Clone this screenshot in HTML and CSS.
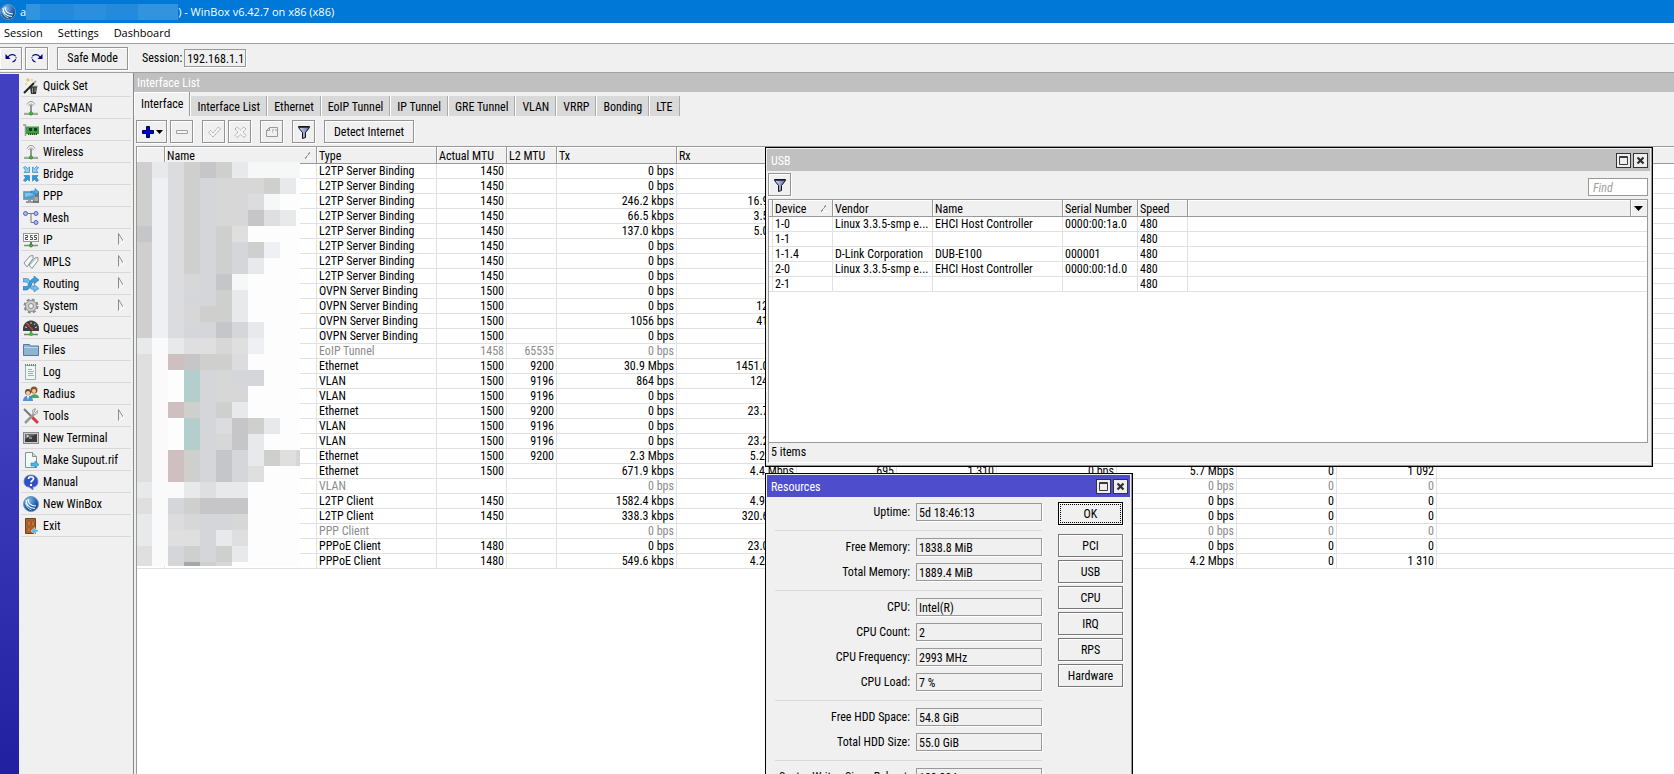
FILE: index.html
```html
<!DOCTYPE html>
<html lang="en">
<head>
<meta charset="utf-8">
<title>WinBox</title>
<link rel="stylesheet" href="styles.css">
</head>
<body>
<svg class="defs" aria-hidden="true">
  <defs>
    <linearGradient id="funnel-fill" x1="0" x2="1" y1="0" y2="0"><stop offset="0" stop-color="#dfe6f5"/><stop offset="1" stop-color="#5468a8"/></linearGradient>
    <radialGradient id="ball" cx=".35" cy=".25" r=".8"><stop offset="0" stop-color="#8cc4f0"/><stop offset=".55" stop-color="#2a70bd"/><stop offset="1" stop-color="#0d3e7c"/></radialGradient>
    <symbol id="i-filter" viewBox="0 0 16 16"><path d="M2.500 2.500h11v1l-4 5v5l-3 1v-6l-4-5z" fill="url(#funnel-fill)" stroke="#101018"/><path d="M3 3.500h10" stroke="#333c58"/></symbol>
    <symbol id="i-globe" viewBox="0 0 16 16"><circle cx="8" cy="8" r="7.500" fill="url(#ball)" stroke="#7393b5"/><path d="M3 4c0 5 3 8 9 8.500M5 3c0 4 3 7 8 7" stroke="#fff" stroke-width="1.200" fill="none"/><path d="M2.500 7c1 4 3 6 6 7" stroke="#b9dcf7" fill="none"/></symbol>
    <symbol id="i-antenna" viewBox="0 0 16 16"><path d="M4 4.500c2-4 6-4 8 0M5.500 6c1-2.500 4-2.500 5 0" fill="none" stroke="#9a9a9a"/><path d="M8 5v7" stroke="#777" stroke-width="1.500"/><path d="M1 13.500h14" stroke="#a8aaa8" stroke-width="1.500"/><path d="M1 14.500h14" stroke="#777" stroke-width=".6"/><circle cx="8" cy="13.500" r="1.600" fill="#2bc52f" stroke="#16721a" stroke-width=".6"/></symbol>
    <symbol id="i-more" viewBox="0 0 6 12"><path d="M.500 11.500V.500l5 8" fill="none" stroke="#8c8c8c"/><path d="M5.500 7v2L1 11.500" fill="none" stroke="#fff"/></symbol>
  </defs>
</svg>

<header class="titlebar">
  <svg class="icon" viewBox="0 0 16 16"><use href="#i-globe"/></svg>
  <h1 class="caption"><span>a</span><span class="masked"><i></i><i></i><i></i><i></i><i></i></span><span>) - WinBox v6.42.7 on x86 (x86)</span></h1>
</header>

<nav class="menubar">
  <button type="button">Session</button>
  <button type="button">Settings</button>
  <button type="button">Dashboard</button>
</nav>

<div class="toolbar">
  <button type="button" class="btn tool first" aria-label="Undo"><svg class="icon" viewBox="0 0 16 16"><path d="M2.500 4v5h5z" fill="#000080"/><path d="M5 7c2-3 6-3 7.500-1s0 5-3 6" fill="none" stroke="#000080" stroke-width="1.200" stroke-dasharray="9 1 1 1"/></svg></button>
  <button type="button" class="btn tool" aria-label="Redo"><svg class="icon" viewBox="0 0 16 16"><path d="M13.500 4v5h-5z" fill="#000080"/><path d="M11 7c-2-3-6-3-7.500-1s0 5 3 6" fill="none" stroke="#000080" stroke-width="1.200" stroke-dasharray="9 1 1 1"/></svg></button>
  <button type="button" class="btn safe">Safe Mode</button>
  <label class="session">Session: <input class="field" value="192.168.1.1" readonly></label>
</div>

<div class="workspace">
  <div class="brand"></div>
  <nav class="sidebar">
    <a href="#quick"><svg class="icon" viewBox="0 0 16 16"><path d="M7 9h7l-1 7H8z" fill="#333"/><path d="M6.500 8.500h8" stroke="#777" stroke-width="1.500"/><path d="M1 15l10-10" stroke="#222" stroke-width="2"/><path d="M11 5l2-2" stroke="#aaa" stroke-width="2"/><path d="M9.500 10v5M12 10v4" stroke="#999"/><path d="M5 0v4M3 2h4M9 1v2M3 5v2" stroke="#e0bd35"/></svg>Quick Set</a>
    <a href="#capsman"><svg class="icon" viewBox="0 0 16 16"><use href="#i-antenna"/></svg>CAPsMAN</a>
    <a href="#interfaces"><svg class="icon" viewBox="0 0 16 16"><path d="M0 3h2.500v11" fill="none" stroke="#999" stroke-width="1.500"/><path d="M3 4h13v8H3z" fill="#3e9b46"/><path d="M3 4.500h13" stroke="#8bd184"/><path d="M6 6h3v3H6zM11 6h3v3h-3z" fill="#173d1d"/><path d="M5 12h9v1H5z" fill="#b3a33e"/><path d="M5.500 11v2M7.500 11v2M9.500 11v2M11.500 11v2M13.500 11v2" stroke="#1c5726"/></svg>Interfaces</a>
    <a href="#wireless"><svg class="icon" viewBox="0 0 16 16"><use href="#i-antenna"/></svg>Wireless</a>
    <a href="#bridge"><svg class="icon" viewBox="0 0 16 16"><g stroke="#3a83b5" stroke-width=".7"><path d="M.500 1.500l2-1 2 2L6.500 1v5.500H1l1.500-2z" fill="#8dd0f4"/><path d="M15.500 1.500l-2-1-2 2L9.500 1v5.500H15l-1.500-2z" fill="#8dd0f4"/><path d="M.500 14.500l2 1 2-2 2 1.500V9.500H1l1.500 2z" fill="#2b9ae0"/><path d="M15.500 14.500l-2 1-2-2-2 1.500V9.500H15l-1.500 2z" fill="#2b9ae0"/></g></svg>Bridge</a>
    <a href="#ppp"><svg class="icon" viewBox="0 0 16 16"><path d="M10 4h6v11h-6z" fill="#777"/><path d="M11 10h4M11 12h4" stroke="#ddd"/><path d="M.500 3.500h11v8H.500z" fill="#4e9ed2" stroke="#999"/><path d="M2 5h8v2L2 9z" fill="#82c2e8"/><path d="M3 14h7M5 12.500h3" stroke="#999" stroke-width="2"/><path d="M8 3h4V.500L16 4l-4 3.500V5H8z" fill="#45b1ef" stroke="#2573ae" stroke-width=".6"/></svg>PPP</a>
    <a href="#mesh"><svg class="icon" viewBox="0 0 16 16"><path d="M5 3.500h6M8 3.500v9h3" fill="none" stroke="#777"/><g fill="#a9b9f3" stroke="#4d63c0"><circle cx="2.500" cy="3.500" r="2"/><circle cx="13" cy="3.500" r="2"/><circle cx="13" cy="12.500" r="2"/></g></svg>Mesh</a>
    <a href="#ip"><svg class="icon" viewBox="0 0 16 16"><rect x=".5" y="1.500" width="15" height="8" fill="#f8f8f8" stroke="#999"/><path d="M2 3.500h2.500v2h-2v2H5M9.500 3.500h-2v2h2v2H7M14 3.500h-2.500v2h2v2H11" fill="none" stroke="#444" stroke-width=".9"/><path d="M8 10v3" stroke="#777" stroke-width="2"/><path d="M1 13.500h14" stroke="#888" stroke-width="1.500"/><circle cx="8" cy="13.500" r="1.600" fill="#2bc52f" stroke="#16721a" stroke-width=".6"/></svg>IP<svg class="more"><use href="#i-more"/></svg></a>
    <a href="#mpls"><svg class="icon" viewBox="0 0 16 16"><g fill="#f5f8f8" stroke="#879494"><path d="M1 9l6-7 3-.5v3L4 13z"/><path d="M6 11l6-7 3-.5v3L9 14.500z"/></g><path d="M7 11l6-6" stroke="#c1dede"/></svg>MPLS<svg class="more"><use href="#i-more"/></svg></a>
    <a href="#routing"><svg class="icon" viewBox="0 0 16 16"><path d="M0 2.500h4c4 0 3 8 7 8V8.500l5 4-5 3.500v-2.500C5 14 6 6 3 6H0z" fill="#6cbcf0" stroke="#3a80b0" stroke-width=".6"/><path d="M0 10.500h3c4 0 3-8 8-8V0l5 4-5 4V5.500C8 6 8 14 3 14H0z" fill="#3d9be0" stroke="#2d72a5" stroke-width=".6"/></svg>Routing<svg class="more"><use href="#i-more"/></svg></a>
    <a href="#system"><svg class="icon" viewBox="0 0 16 16"><circle cx="8" cy="8" r="6.500" fill="none" stroke="#8b8b8b" stroke-width="2" stroke-dasharray="3 2.100"/><circle cx="8" cy="8" r="5.500" fill="#cdcdcd" stroke="#929292"/><circle cx="8" cy="8" r="2.500" fill="#f0f0f0" stroke="#888"/></svg>System<svg class="more"><use href="#i-more"/></svg></a>
    <a href="#queues"><svg class="icon" viewBox="0 0 16 16"><path d="M0 11C-1 4 4 .500 8 .500S17 4 16 11z" fill="#3d4040"/><path d="M2 7l2 .5M4 3.500l1.500 1.500M8 2v2M12 3.500L11 5M14 7l-2 .5" stroke="#ccc"/><path d="M3 3l7 7" stroke="#e03434" stroke-width="1.300"/><path d="M1 14.500h14" stroke="#777" stroke-width="1.500"/><path d="M8 11v2" stroke="#777" stroke-width="2"/><circle cx="8" cy="14" r="2" fill="#2bc52f"/></svg>Queues</a>
    <a href="#files"><svg class="icon" viewBox="0 0 16 16"><path d="M.500 13.500v-11h6l1 1.500h8v9.500z" fill="#8eb4d4" stroke="#527a9d"/><path d="M1 5.500h14" stroke="#bed7e9"/></svg>Files</a>
    <a href="#log"><svg class="icon" viewBox="0 0 16 16"><path d="M2.500 1.500h10v14h-10z" fill="#eef6f4" stroke="#9bb0ad"/><path d="M2 1h11" stroke="#6f8583" stroke-width="2" stroke-dasharray="1 1"/><path d="M5 5.500h4M5 7.500h6M5 9.500h5M5 11.500h6" stroke="#9fb2b0"/></svg>Log</a>
    <a href="#radius"><svg class="icon" viewBox="0 0 16 16"><circle cx="11" cy="4" r="3.500" fill="#8a5428"/><circle cx="11" cy="5" r="2" fill="#f0c79c"/><path d="M7 12c0-5 9-5 9 0z" fill="#49a55e"/><circle cx="5" cy="6" r="3" fill="#784521"/><circle cx="5" cy="7" r="2" fill="#f3cfaa"/><path d="M0 15c0-7 10-7 10 0z" fill="#4f91d2"/><path d="M4 10l1 4 1-4z" fill="#fff"/></svg>Radius</a>
    <a href="#tools"><svg class="icon" viewBox="0 0 16 16"><path d="M1 1l8 8" stroke="#777" stroke-width="2"/><path d="M9 9l5 5" stroke="#d8383e" stroke-width="3" stroke-linecap="round"/><path d="M2 15l9-9" stroke="#999" stroke-width="2.500"/><path d="M14.500 2.500l-2 2-1.500-1.500 2-2C8 0 9 7 12 6.500c2 0 3-2 2.500-4z" fill="#d7d7d7" stroke="#888" stroke-width=".7"/></svg>Tools<svg class="more"><use href="#i-more"/></svg></a>
    <a href="#terminal"><svg class="icon" viewBox="0 0 16 16"><rect x=".5" y="2.500" width="15" height="11" fill="#ccc" stroke="#888"/><path d="M2 4h12v8H2z" fill="#3c3c3f"/><path d="M2 4h12L2 9z" fill="#67686c"/><path d="M3.500 5l2 1-2 1M6 8h3" fill="none" stroke="#fff" stroke-width=".8"/></svg>New Terminal</a>
    <a href="#supout"><svg class="icon" viewBox="0 0 16 16"><path d="M2.500.500h7l4 4v11h-11z" fill="#f1f9f7" stroke="#839593"/><path d="M9.500.500v4h4" fill="#c8d8d6" stroke="#839593"/><path d="M8 11h4V9l4 3.500-4 3.500v-2H8z" fill="#49b6ef" stroke="#2a78ad" stroke-width=".6"/></svg>Make Supout.rif</a>
    <a href="#manual"><svg class="icon" viewBox="0 0 16 16"><path d="M8 1c9 0 9 12 2 12v3l-4-3C-1 13-1 1 8 1z" fill="#3050c8" stroke="#7184cf" stroke-width=".8"/><path d="M5.500 5c0-3 5.500-3 5 0 0 1.500-2.500 1.500-2.500 3.500" fill="none" stroke="#fff" stroke-width="1.700"/><path d="M7 10h2v2H7z" fill="#fff"/></svg>Manual</a>
    <a href="#winbox"><svg class="icon" viewBox="0 0 16 16"><use href="#i-globe"/></svg>New WinBox</a>
    <a href="#exit"><svg class="icon" viewBox="0 0 16 16"><path d="M2.500.500h10v15h-10z" fill="#b0622c" stroke="#75401d"/><path d="M5 3h2v5H5zM9 3h2v5H9zM5 10h2v4H5z" fill="#d18a4d" stroke="#8c4b22" stroke-width=".6"/><path d="M15 11.500h-3V9.500l-4 3.500 4 3v-2h3z" fill="#49b6ef" stroke="#e4f4fc" stroke-width=".6"/></svg>Exit</a>
  </nav>

  <main class="desktop">
    <section class="pane">
      <h2 class="pane-title">Interface List</h2>
      <div class="tabs">
        <button type="button" class="active">Interface</button><button type="button">Interface List</button><button type="button">Ethernet</button><button type="button">EoIP Tunnel</button><button type="button">IP Tunnel</button><button type="button">GRE Tunnel</button><button type="button">VLAN</button><button type="button">VRRP</button><button type="button">Bonding</button><button type="button">LTE</button>
      </div>
      <div class="actions">
        <button type="button" class="btn tool add" aria-label="Add"><svg class="icon wide" viewBox="0 0 24 16"><path d="M6.500 2.500h3v4h4v3h-4v4h-3v-4h-4v-3h4z" fill="#0000f0" stroke="#000040"/><path d="M16 6h7l-3.500 4z" fill="#000"/></svg></button>
        <button type="button" class="btn tool" aria-label="Remove"><svg class="icon" viewBox="0 0 16 16"><path d="M2.500 6.500h11v3h-11z" fill="#f5f5f5" stroke="#a0a0a0"/></svg></button>
        <button type="button" class="btn tool gap" aria-label="Enable"><svg class="icon" viewBox="0 0 16 16"><path d="M2.500 8.500l2-2 2.500 2.500 5.500-6 2 2L7 13z" fill="#f5f5f5" stroke="#a0a0a0" stroke-dasharray="1.500 .7"/></svg></button>
        <button type="button" class="btn tool" aria-label="Disable"><svg class="icon" viewBox="0 0 16 16"><path d="M3 5l2-2 3.500 3L12 3l2 2-3 3 3 3.500-2 2-3.500-3-3.500 3-2-2 3-3.500z" fill="#f5f5f5" stroke="#a0a0a0" stroke-dasharray="1.500 .7"/></svg></button>
        <button type="button" class="btn tool gap" aria-label="Comment"><svg class="icon" viewBox="0 0 16 16"><path d="M2.500 12.500v-6l3-3h8v9zM2.500 6.500h3v-3M8 6h2M11 6h2M8 8h1" fill="none" stroke="#999"/></svg></button>
        <button type="button" class="btn tool gap" aria-label="Filter"><svg class="icon" viewBox="0 0 16 16"><use href="#i-filter"/></svg></button>
        <button type="button" class="btn gap detect">Detect Internet</button>
      </div>
      <div class="list">
        <table class="grid interfaces">
          <colgroup><col class="w-flag"><col class="w-name"><col class="w-120"><col class="w-70"><col class="w-50"><col class="w-120"><col class="w-120"><col class="w-100"><col class="w-100"><col class="w-120"><col class="w-120"><col class="w-100"><col class="w-100"><col></colgroup>
          <thead><tr><th></th><th class="sorted">Name</th><th>Type</th><th>Actual MTU</th><th>L2 MTU</th><th>Tx</th><th>Rx</th><th></th><th></th><th></th><th></th><th></th><th></th><th></th></tr></thead>
          <tbody id="interface-rows"></tbody>
        </table>
        <svg class="mosaic" id="mosaic" viewBox="0 0 164 404" shape-rendering="crispEdges" aria-hidden="true"></svg>
      </div>
    </section>

    <section class="window usb">
      <header class="window-title"><h2>USB</h2>
        <button type="button" aria-label="Maximize"><svg viewBox="0 0 11 11"><path d="M1.500 1.500h8v8h-8zM1 2.500h9" fill="none" stroke="#3c3840"/></svg></button>
        <button type="button" aria-label="Close"><svg viewBox="0 0 11 11"><path d="M2.500 2.500l6 6M8.500 2.500l-6 6" stroke="#302c34" stroke-width="2.200"/></svg></button>
      </header>
      <div class="usb-tools">
        <button type="button" class="btn tool" aria-label="Filter"><svg class="icon" viewBox="0 0 16 16"><use href="#i-filter"/></svg></button>
        <input class="find" placeholder="Find" aria-label="Find">
      </div>
      <div class="usb-list">
        <table class="grid devices">
          <colgroup><col class="w-edge"><col class="w-60"><col class="w-100"><col class="w-130"><col class="w-75"><col class="w-50"><col><col class="w-menu"></colgroup>
          <thead><tr><th></th><th class="sorted">Device</th><th>Vendor</th><th>Name</th><th>Serial Number</th><th>Speed</th><th></th><th class="pick"><svg viewBox="0 0 9 5"><path d="M0 0h9L4.500 5z"/></svg></th></tr></thead>
          <tbody>
            <tr><td></td><td>1-0</td><td>Linux 3.3.5-smp e...</td><td>EHCI Host Controller</td><td>0000:00:1a.0</td><td>480</td><td colspan="2"></td></tr>
            <tr><td></td><td>1-1</td><td></td><td></td><td></td><td>480</td><td colspan="2"></td></tr>
            <tr><td></td><td>1-1.4</td><td>D-Link Corporation</td><td>DUB-E100</td><td>000001</td><td>480</td><td colspan="2"></td></tr>
            <tr><td></td><td>2-0</td><td>Linux 3.3.5-smp e...</td><td>EHCI Host Controller</td><td>0000:00:1d.0</td><td>480</td><td colspan="2"></td></tr>
            <tr><td></td><td>2-1</td><td></td><td></td><td></td><td>480</td><td colspan="2"></td></tr>
          </tbody>
        </table>
      </div>
      <footer class="status">5 items</footer>
    </section>

    <section class="window resources">
      <header class="window-title"><h2>Resources</h2>
        <button type="button" aria-label="Maximize"><svg viewBox="0 0 11 11"><path d="M1.500 1.500h8v8h-8zM1 2.500h9" fill="none" stroke="#3c3840"/></svg></button>
        <button type="button" aria-label="Close"><svg viewBox="0 0 11 11"><path d="M2.500 2.500l6 6M8.500 2.500l-6 6" stroke="#302c34" stroke-width="2.200"/></svg></button>
      </header>
      <div class="resource-body">
        <form class="facts">
          <fieldset><label>Uptime: <input class="field" value="5d 18:46:13" readonly></label></fieldset>
          <fieldset><label>Free Memory: <input class="field" value="1838.8 MiB" readonly></label><label>Total Memory: <input class="field" value="1889.4 MiB" readonly></label></fieldset>
          <fieldset><label>CPU: <input class="field" value="Intel(R)" readonly></label><label>CPU Count: <input class="field" value="2" readonly></label><label>CPU Frequency: <input class="field" value="2993 MHz" readonly></label><label>CPU Load: <input class="field" value="7 %" readonly></label></fieldset>
          <fieldset><label>Free HDD Space: <input class="field" value="54.8 GiB" readonly></label><label>Total HDD Size: <input class="field" value="55.0 GiB" readonly></label></fieldset>
          <fieldset><label>Sector Writes Since Reboot: <input class="field" value="188 394" readonly></label></fieldset>
        </form>
        <div class="side-buttons">
          <button type="button" class="btn ok">OK</button>
          <button type="button" class="btn">PCI</button>
          <button type="button" class="btn">USB</button>
          <button type="button" class="btn">CPU</button>
          <button type="button" class="btn">IRQ</button>
          <button type="button" class="btn">RPS</button>
          <button type="button" class="btn">Hardware</button>
        </div>
      </div>
    </section>
  </main>
</div>
<script src="app.js"></script>
</body>
</html>
```

FILE: styles.css
```css
* { box-sizing: border-box; }

body {
  margin: 0;
  height: 100vh;
  display: flex;
  flex-direction: column;
  overflow: hidden;
  background: #f0f0f0;
  color: #000;
  font: 12px/14px "Roboto Condensed", Roboto, "Liberation Sans", sans-serif;
}

button, input { font: inherit; color: inherit; }
h1, h2 { margin: 0; font: inherit; }
.defs { position: absolute; width: 0; height: 0; }
.icon { width: 16px; height: 16px; flex: none; display: block; }
.icon.wide { width: 24px; }

.titlebar {
  flex: none;
  height: 23px;
  display: flex;
  align-items: center;
  gap: 4px;
  background: #0078d7;
  color: #fff;
}
.caption { display: flex; align-items: center; font: 11px/16px "Open Sans", "Noto Sans", sans-serif; }
.masked { display: grid; grid-template-columns: 14px 34px 32px 32px 40px; height: 16px; }
.masked i { background: #2b8fde; }
.masked i:nth-child(2n) { background: #248adb; }
.masked i:nth-child(1), .masked i:nth-child(5) { background: #3293df; }

.menubar {
  flex: none;
  height: 21px;
  padding-left: 4px;
  display: flex;
  gap: 15px;
  background: #fff;
  border-bottom: 1px solid #a0a0a0;
}
.menubar button { border: 0; padding: 0; background: none; font: 11px/16px "Open Sans", "Noto Sans", sans-serif; }

.btn {
  height: 23px;
  padding: 0 8px;
  border: 1px solid #949494;
  background: #f0f0f0;
  box-shadow: inset 1px 1px #fff, 1px 1px #fff;
  text-align: center;
  white-space: nowrap;
}
.tool { width: 23px; padding: 0; display: flex; align-items: center; justify-content: center; }
.field {
  height: 18px;
  padding: 1px 2px 0;
  border: 1px solid #999;
  border-radius: 0;
  background: #f0f0f0;
  box-shadow: 1px 1px #fff;
  outline: 0;
}

.toolbar {
  flex: none;
  height: 29px;
  display: flex;
  align-items: center;
  gap: 3px;
  border-bottom: 1px solid #a0a0a0;
}
.toolbar .first { width: 22px; border-left: 0; }
.safe { width: 71px; margin-left: 6px; }
.session { margin-left: 11px; display: flex; align-items: center; gap: 2px; }
.session .field { width: 62px; }

.workspace { flex: 1; min-height: 0; display: flex; }
.brand { width: 19px; flex: none; margin-top: 1px; background: linear-gradient(#4040c0 0 45%, #2020a0); }
.sidebar { width: 114px; flex: none; padding: 2px 2px 0; display: flex; flex-direction: column; }
.sidebar a {
  height: 22px;
  flex: none;
  padding: 1px 7px 0 2px;
  display: flex;
  align-items: center;
  gap: 4px;
  border-bottom: 1px solid #d8d8d8;
  color: #000;
  text-decoration: none;
  white-space: nowrap;
}
.more { width: 6px; height: 12px; margin: 0 0 3px auto; }

.desktop { position: relative; flex: 1; min-width: 0; border-left: 1px solid #888; overflow: hidden; }
.pane { height: 100%; display: flex; flex-direction: column; }
.pane-title { height: 19px; padding: 3px; background: #c0c0c0; color: #fff; flex: none; }
.tabs { height: 26px; flex: none; display: flex; align-items: flex-end; padding-bottom: 2px; }
.tabs button {
  height: 20px;
  padding: 1px 6px 0;
  border: 0;
  border-left: 1px solid #fff;
  border-right: 1px solid #aaa;
  background: #d9d9d9;
  white-space: nowrap;
}
.tabs .active { height: 24px; padding: 0 6px; border-right-color: #999; background: #f0f0f0; box-shadow: inset 0 1px #fff; }

.actions { flex: none; height: 28px; display: flex; gap: 3px; padding: 2px 0 3px 2px; }
.actions .add { width: 31px; }
.actions .gap { margin-left: 6px; }
.detect { width: 90px; }

.list { position: relative; flex: 1; min-height: 0; margin-left: 2px; border: solid #999; border-width: 1px 0 0 1px; background: #fff; overflow: hidden; }
.grid { width: 100%; table-layout: fixed; border-collapse: separate; border-spacing: 0; }
.grid th {
  height: 17px;
  padding: 2px 2px 0;
  border: solid #999;
  border-width: 0 1px 1px 0;
  background: #f0f0f0;
  box-shadow: inset 1px 1px #fff;
  font-weight: normal;
  text-align: left;
  white-space: nowrap;
}
.grid td {
  height: 15px;
  padding: 0 2px;
  border: solid #e1e1e1;
  border-width: 0 1px 1px 0;
  white-space: nowrap;
  overflow: hidden;
}
.grid th:last-child, .grid td:last-child { border-right: 0; }
.grid .num { text-align: right; }
.grid .off { color: #8c8c8c; }
.sorted::after {
  content: "";
  float: right;
  width: 7px;
  height: 7px;
  margin: 3px 2px 0 0;
  background: linear-gradient(to bottom right, transparent 43%, #999 44% 56%, transparent 57%) 0 0 / 5px 7px no-repeat, linear-gradient(#fff, #fff) 100% 100% / 5px 1px no-repeat;
}
.w-flag { width: 28px; }
.w-name { width: 152px; }
.w-130 { width: 130px; }
.w-120 { width: 120px; }
.w-100 { width: 100px; }
.w-75 { width: 75px; }
.w-70 { width: 70px; }
.w-60 { width: 60px; }
.w-50 { width: 50px; }
.w-edge { width: 4px; }
.w-menu { width: 16px; }
.grid .pick { padding: 0 3px; line-height: 0; }
.pick svg { width: 9px; height: 5px; }
.grid th:first-child, .grid td:first-child { padding: 0; }

.mosaic { position: absolute; left: -1px; top: 15px; width: 164px; height: 404px; }

.window {
  position: absolute;
  left: 631px;
  display: flex;
  flex-direction: column;
  padding: 1px 3px 3px 1px;
  border: 1px solid #000;
  background: #f0f0f0;
  box-shadow: inset -1px -1px #999;
}
.usb { top: 74px; width: 888px; height: 320px; }
.resources { top: 400px; width: 368px; height: 420px; }
.window-title {
  flex: none;
  height: 22px;
  margin-right: -1px;
  padding: 0 2px 0 4px;
  display: flex;
  align-items: center;
  gap: 2px;
  background: #c0c0c0;
  color: #fff;
}
.resources .window-title { background: #4e4ecd; }
.window-title h2 { margin-right: auto; padding-top: 2px; }
.window-title button { width: 15px; height: 15px; padding: 1px; border: 1px solid #333; background: #eee; line-height: 0; }
.window-title svg { width: 11px; height: 11px; }

.usb-tools { flex: none; height: 28px; padding: 2px 1px 0; display: flex; justify-content: space-between; }
.find { width: 60px; height: 18px; margin-top: 5px; padding: 1px 4px 0; border: 1px solid #999; background: #fff; font-style: italic; }
.find::placeholder { color: #a0a0a0; opacity: 1; }
.usb-list { flex: 1; min-height: 0; margin: 0 1px; border: 1px solid #999; background: #fff; }
.status { flex: none; height: 20px; margin: 0 1px; padding: 2px; border-left: 1px solid #999; border-bottom: 1px solid #fff; }

.resource-body { display: flex; gap: 16px; padding: 5px 6px 0 8px; align-items: flex-start; }
.facts { flex: 1; min-width: 0; }
.facts fieldset { min-width: 0; margin: 0 0 7px; padding: 0 0 9px; border: 0; border-bottom: 1px solid #d9d9d9; display: grid; gap: 7px; }
.facts fieldset:first-child { padding-top: 1px; }
.facts label { display: flex; justify-content: flex-end; align-items: center; gap: 6px; white-space: nowrap; }
.facts .field { width: 126px; }
.side-buttons { width: 65px; flex: none; display: flex; flex-direction: column; gap: 3px; }
.side-buttons .btn { padding: 0; border-color: #777; }
.side-buttons .ok { margin-bottom: 6px; border-color: #000; outline: 1px dotted #000; outline-offset: -3px; }
```

FILE: app.js
```js
// type, MTU, L2 MTU, tx, rx, tx packets, rx packets, fp tx, fp rx, fp tx packets, fp rx packets, inactive
const idle = ["0", "0", "0 bps", "0 bps", "0", "0"];
const rows = [
  ["L2TP Server Binding", "1450", "", "0 bps", "0 bps", ...idle],
  ["L2TP Server Binding", "1450", "", "0 bps", "0 bps", ...idle],
  ["L2TP Server Binding", "1450", "", "246.2 kbps", "16.9 kbps", ...idle],
  ["L2TP Server Binding", "1450", "", "66.5 kbps", "3.5 kbps", ...idle],
  ["L2TP Server Binding", "1450", "", "137.0 kbps", "5.0 kbps", ...idle],
  ["L2TP Server Binding", "1450", "", "0 bps", "0 bps", ...idle],
  ["L2TP Server Binding", "1450", "", "0 bps", "0 bps", ...idle],
  ["L2TP Server Binding", "1450", "", "0 bps", "0 bps", ...idle],
  ["OVPN Server Binding", "1500", "", "0 bps", "0 bps", ...idle],
  ["OVPN Server Binding", "1500", "", "0 bps", "128 bps", ...idle],
  ["OVPN Server Binding", "1500", "", "1056 bps", "416 bps", ...idle],
  ["OVPN Server Binding", "1500", "", "0 bps", "0 bps", ...idle],
  ["EoIP Tunnel", "1458", "65535", "0 bps", "0 bps", ...idle, true],
  ["Ethernet", "1500", "9200", "30.9 Mbps", "1451.0 kbps", ...idle],
  ["VLAN", "1500", "9196", "864 bps", "1248 bps", ...idle],
  ["VLAN", "1500", "9196", "0 bps", "0 bps", ...idle],
  ["Ethernet", "1500", "9200", "0 bps", "23.7 kbps", ...idle],
  ["VLAN", "1500", "9196", "0 bps", "0 bps", ...idle],
  ["VLAN", "1500", "9196", "0 bps", "23.2 kbps", ...idle],
  ["Ethernet", "1500", "9200", "2.3 Mbps", "5.2 Mbps", ...idle],
  ["Ethernet", "1500", "", "671.9 kbps", "4.4 Mbps", "695", "1 310", "0 bps", "5.7 Mbps", "0", "1 092"],
  ["VLAN", "", "", "0 bps", "0 bps", ...idle, true],
  ["L2TP Client", "1450", "", "1582.4 kbps", "4.9 Mbps", ...idle],
  ["L2TP Client", "1450", "", "338.3 kbps", "320.6 kbps", ...idle],
  ["PPP Client", "", "", "0 bps", "0 bps", ...idle, true],
  ["PPPoE Client", "1480", "", "0 bps", "23.0 kbps", ...idle],
  ["PPPoE Client", "1480", "", "549.6 kbps", "4.2 Mbps", "0", "0", "0 bps", "4.2 Mbps", "0", "1 310"],
];

const body = document.getElementById("interface-rows");
for (const row of rows) {
  const tr = body.insertRow();
  if (row[11]) tr.className = "off";
  tr.insertCell();
  tr.insertCell();
  row.slice(0, 11).forEach((text, i) => {
    const td = tr.insertCell();
    td.textContent = text;
    if (i > 0) td.className = "num";
  });
  tr.insertCell();
}

// Pixelated cover over the flag and name columns, one letter per block.
const shades = {
  a: "#d0cecf", b: "#eff0f3", c: "#dcdcdf", d: "#cfcfce", e: "#d5d6d9", f: "#d6d7d6",
  g: "#c6c5c8", h: "#e8e9eb", i: "#f6f7f7", w: "#fdfdfd", x: "#fafafa", y: "#dfdfe0",
  p: "#cebfc0", t: "#b3cecd", z: "#a4a7a9",
};
const blocks = [
  "ahcdgdhiiii",
  "dbcdefffdhw",
  "dbcdeffciww",
  "dbcdeffgyhw",
  "gbcdedywwww",
  "abcdededbww",
  "abcdedehwww",
  "abcfegiwwww",
  "abceedhwwww",
  "abcfddhwwww",
  "abceegehwww",
  "hxhyyfybwww",
  "yxpgddcwwww",
  "yxwtefeewww",
  "yxwteffwwww",
  "yxpdedhwwww",
  "yxwtecgdhww",
  "yxwtefghwww",
  "yxpdegehdye",
  "yxpdegeywww",
  "hxxhyhhwwww",
  "yxedgggwwww",
  "hxcfeefwwww",
  "hxyyehywwww",
  "yxededhwwww",
  "yxezdfwwwww",
];
document.getElementById("mosaic").innerHTML = blocks.map((line, r) =>
  [...line].map((k, c) => `<rect x="${c * 16}" y="${r * 16}" width="16" height="16" fill="${shades[k]}"/>`).join("")
).join("");
```
